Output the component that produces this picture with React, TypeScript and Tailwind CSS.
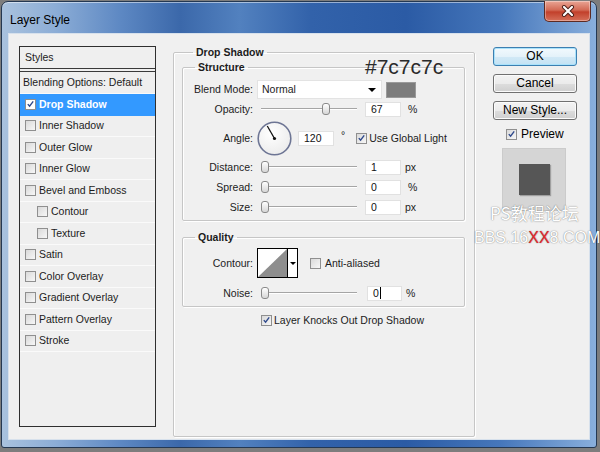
import clsx from 'clsx';

const FONT = "font-['Liberation_Sans',Arial,sans-serif]";

interface StyleItem {
  label: string;
  checked?: boolean;
  active?: boolean;
  sub?: boolean;
}

const styleItems: StyleItem[] = [
  { label: 'Drop Shadow', checked: true, active: true },
  { label: 'Inner Shadow' },
  { label: 'Outer Glow' },
  { label: 'Inner Glow' },
  { label: 'Bevel and Emboss' },
  { label: 'Contour', sub: true },
  { label: 'Texture', sub: true },
  { label: 'Satin' },
  { label: 'Color Overlay' },
  { label: 'Gradient Overlay' },
  { label: 'Pattern Overlay' },
  { label: 'Stroke' },
];

function CheckBox({ checked, className }: { checked?: boolean; className?: string }) {
  return (
    <span
      className={clsx(
        'inline-flex h-[11px] w-[11px] shrink-0 items-center justify-center border border-[#8f8f8f] bg-[linear-gradient(135deg,#d9d9d9,#f7f7f7)]',
        className
      )}
    >
      {checked && (
        <svg viewBox="0 0 11 11" className="h-[10px] w-[10px]">
          <path d="M2.2 5.6 L4.4 8.2 L8.8 2.2" stroke="#2f4a8c" strokeWidth="1.7" fill="none" />
        </svg>
      )}
    </span>
  );
}

function Slider({ pos }: { pos: number }) {
  return (
    <div className="relative h-[12px] w-[96px]">
      <div className="absolute left-0 right-0 top-[5px] h-[2px] border-t border-b border-t-[#a5a5a5] border-b-white" />
      <div
        className="absolute top-0 h-[12px] w-[8px] rounded-[3px] border border-[#8a8a8a] bg-[linear-gradient(#ffffff,#d6d6d6)]"
        style={{ left: pos }}
      />
    </div>
  );
}

function Field({ value, className, cursor }: { value: string; className?: string; cursor?: boolean }) {
  return (
    <div
      className={clsx(
        'flex h-[15px] items-center border border-[#e1e1e1] bg-white pl-[5px] text-[10.5px] text-[#111]',
        className
      )}
    >
      {value}
      {cursor && <span className="ml-[1px] h-[12px] w-[1px] bg-black" />}
    </div>
  );
}

function Row({ label, className, children }: { label: string; className?: string; children?: React.ReactNode }) {
  return (
    <div className={clsx('flex items-center', className)}>
      <span className="w-[70px] shrink-0 text-right">{label}</span>
      <div className="ml-[4px] flex items-center">{children}</div>
    </div>
  );
}

function SliderRow({ label, pos, value, unit, className }: { label: string; pos: number; value: string; unit: string; className?: string }) {
  return (
    <Row label={label} className={className}>
      <div className="ml-[4px]">
        <Slider pos={pos} />
      </div>
      <Field value={value} className="ml-[8px] w-[36px]" />
      <span className={unit === '%' ? 'ml-[7px]' : 'ml-[4px]'}>{unit}</span>
    </Row>
  );
}

function Dial() {
  return (
    <svg width="35" height="35" viewBox="0 0 35 35">
      <defs>
        <radialGradient id="dialFill" cx="40%" cy="35%" r="70%">
          <stop offset="0" stopColor="#ffffff" />
          <stop offset="1" stopColor="#ebebeb" />
        </radialGradient>
      </defs>
      <circle cx="17.5" cy="17.5" r="16.3" fill="url(#dialFill)" stroke="#6d7594" strokeWidth="1.6" />
      <line x1="17.5" y1="17.5" x2="10.3" y2="5" stroke="#111" strokeWidth="1.3" />
      <circle cx="17.5" cy="17.5" r="1.6" fill="#111" />
    </svg>
  );
}

function Button({ children, primary }: { children: React.ReactNode; primary?: boolean }) {
  return (
    <button
      type="button"
      className={clsx(
        'flex h-[19px] w-[84px] items-center justify-center rounded-[3px] border text-[12px] text-black',
        primary
          ? 'border-[#3c7fb1] bg-[linear-gradient(#f2f9fd,#e4f2fa_50%,#d2e9f6_51%,#c3e2f4)] shadow-[inset_0_0_0_1px_#a9e2fb]'
          : 'border-[#707070] bg-[linear-gradient(#f3f3f3,#ebebeb_50%,#dddddd_51%,#cfcfcf)] shadow-[inset_0_0_0_1px_#fbfbfb]'
      )}
    >
      {children}
    </button>
  );
}

export default function App() {
  return (
    <div className={clsx('relative h-[452px] w-[600px] overflow-hidden bg-[#7d7d7d]', FONT)}>
      <div className="ml-[1px] mt-[1px] flex h-[447px] w-[596px] flex-col rounded-t-[7px] rounded-b-[3px] border border-[#243852] bg-[linear-gradient(90deg,#a9c2de_0%,#8cadd6_9%,#5d88c3_20%,#3b68aa_30%,#5281bf_40%,#3262aa_52%,#2b5ba5_68%,#4677bb_84%,#89afdc_100%)] px-[6px] pb-[7px] shadow-[inset_0_1px_0_rgba(255,255,255,0.5)]">
        {/* title bar */}
        <div className="flex h-[31px] shrink-0 items-start justify-between">
          <span className="pl-[2px] pt-[11px] text-[12px] leading-[14px] text-black">Layer Style</span>
          <div className="-mr-[1px] -mt-[1px] flex h-[21px] w-[47px] items-center justify-center rounded-b-[5px] border border-t-0 border-[#5c2a22] bg-[linear-gradient(#e9a595,#d36a55_45%,#c2402b_55%,#d5705a)] shadow-[inset_0_0_0_1px_rgba(255,255,255,0.35)]">
            <svg width="14" height="12" viewBox="0 0 14 12">
              <path d="M3 2 L11 10 M11 2 L3 10" stroke="#4a1d16" strokeWidth="4" strokeLinecap="round" />
              <path d="M3 2 L11 10 M11 2 L3 10" stroke="#ffffff" strokeWidth="2.2" strokeLinecap="round" />
            </svg>
          </div>
        </div>

        {/* client area */}
        <div className="flex h-[407px] border border-[#d7e1ec] bg-[#f0f0f0] pl-[10px] pt-[12px] text-[10.5px] leading-[13px] text-[#1c1c1c]">
          {/* styles list */}
          <div className="flex h-[381px] w-[137px] shrink-0 flex-col border border-[#2f2f2f] bg-[#efefef]">
            <div className="flex h-[25px] items-center border-b-[4px] border-double border-[#3a3a3a] pl-[5px]">Styles</div>
            <div className="flex h-[22px] items-center border-b border-[#fafafa] pl-[3px]">Blending Options: Default</div>
            {styleItems.map((item) => (
              <div
                key={item.label}
                className={clsx(
                  'flex h-[21.5px] items-center border-b',
                  item.sub ? 'pl-[17px]' : 'pl-[5px]',
                  item.active ? 'border-[#3399ff] bg-[#3399ff] font-bold text-white' : 'border-[#fafafa]'
                )}
              >
                <CheckBox checked={item.checked} className={item.active ? 'bg-white bg-none' : undefined} />
                <span className="ml-[3px]">{item.label}</span>
              </div>
            ))}
          </div>

          {/* drop shadow settings */}
          <fieldset className="-mt-[1px] ml-[17px] h-[392px] w-[302px] shrink-0 rounded-[2px] border border-[#c6c6c6] px-[8px] shadow-[inset_1px_1px_0_#fff,1px_1px_0_#fff]">
            <legend className="ml-[11px] px-[3px] font-bold leading-[14px]">Drop Shadow</legend>

            <fieldset className="mt-[1px] w-[283px] rounded-[2px] border border-[#c6c6c6] pb-[3px] shadow-[inset_1px_1px_0_#fff,1px_1px_0_#fff]">
              <legend className="ml-[12px] px-[3px] font-bold leading-[14px]">Structure</legend>
              <Row label="Blend Mode:" className="mt-[6px] h-[19px]">
                <div className="flex h-[19px] w-[125px] items-center justify-between border border-[#e3e3e3] bg-white pl-[4px] pr-[5px]">
                  <span>Normal</span>
                  <span className="h-0 w-0 border-x-[4px] border-t-[4px] border-x-transparent border-t-black" />
                </div>
                <div className="ml-[4px] h-[16px] w-[30px] border border-[#9a9a9a] bg-[#7c7c7c]" />
              </Row>
              <SliderRow label="Opacity:" pos={61} value="67" unit="%" className="h-[20px]" />
              <Row label="Angle:" className="h-[38px]">
                <Dial />
                <Field value="120" className="ml-[6px] w-[36px]" />
                <span className="ml-[7px] -mt-[6px]">°</span>
                <CheckBox checked className="ml-[11px]" />
                <span className="ml-[2px]">Use Global Light</span>
              </Row>
              <SliderRow label="Distance:" pos={0} value="1" unit="px" className="h-[20px]" />
              <SliderRow label="Spread:" pos={0} value="0" unit="%" className="h-[20px]" />
              <SliderRow label="Size:" pos={0} value="0" unit="px" className="h-[20px]" />
            </fieldset>

            <fieldset className="mt-[9px] w-[283px] rounded-[2px] border border-[#c6c6c6] pb-[3px] shadow-[inset_1px_1px_0_#fff,1px_1px_0_#fff]">
              <legend className="ml-[12px] px-[3px] font-bold leading-[14px]">Quality</legend>
              <Row label="Contour:" className="mt-[4px] h-[30px]">
                <div className="flex h-[30px] w-[41px] border border-black bg-white">
                  <svg width="29" height="28" viewBox="0 0 29 28">
                    <polygon points="0,28 29,0 29,28" fill="#8e8e8e" />
                  </svg>
                  <div className="flex w-[10px] items-center justify-center border-l border-black">
                    <span className="h-0 w-0 border-x-[3px] border-t-[3px] border-x-transparent border-t-black" />
                  </div>
                </div>
                <CheckBox className="ml-[12px]" />
                <span className="ml-[4px]">Anti-aliased</span>
              </Row>
              <Row label="Noise:" className="mt-[5px] h-[20px]">
                <div className="ml-[4px]">
                  <Slider pos={0} />
                </div>
                <Field value="0" cursor className="ml-[10px] w-[35px]" />
                <span className="ml-[4px]">%</span>
              </Row>
            </fieldset>

            <div className="mt-[3px] flex h-[20px] items-center pl-[79px]">
              <CheckBox checked />
              <span className="ml-[2px]">Layer Knocks Out Drop Shadow</span>
            </div>
          </fieldset>

          {/* buttons */}
          <div className="ml-[18px] flex w-[84px] shrink-0 flex-col pt-[1px]">
            <Button primary>OK</Button>
            <div className="mt-[8px]">
              <Button>Cancel</Button>
            </div>
            <div className="mt-[8px]">
              <Button>New Style...</Button>
            </div>
            <div className="ml-[13px] mt-[7px] flex h-[14px] items-center text-[12px] text-black">
              <CheckBox checked />
              <span className="ml-[4px]">Preview</span>
            </div>
            <div className="ml-[9px] mt-[7px] flex h-[63px] w-[64px] items-center justify-center border border-[#cbcbcb] bg-[#d5d5d5]">
              <div className="h-[31px] w-[31px] bg-[#565656] shadow-[1px_1px_1px_rgba(0,0,0,0.25)]" />
            </div>
          </div>
        </div>
      </div>

      {/* annotation & watermark overlays */}
      <span className="absolute left-[365px] top-[55px] text-[21px] leading-[24px] text-[#2a2a2a]">#7c7c7c</span>
      <span className="absolute left-[490px] top-[203px] font-['Noto_Sans_CJK_SC',sans-serif] text-[17px] leading-[20px] text-white [text-shadow:0_0_1px_rgba(0,0,0,0.45),0_0_2px_rgba(0,0,0,0.2)]">
        PS教程论坛
      </span>
      <span className="absolute left-[474px] top-[228px] text-[16px] leading-[19px] text-white [text-shadow:0_0_1px_rgba(0,0,0,0.45),0_0_2px_rgba(0,0,0,0.2)]">
        BBS.16<span className="text-[#e8262b]">XX</span>8.COM
      </span>
    </div>
  );
}
